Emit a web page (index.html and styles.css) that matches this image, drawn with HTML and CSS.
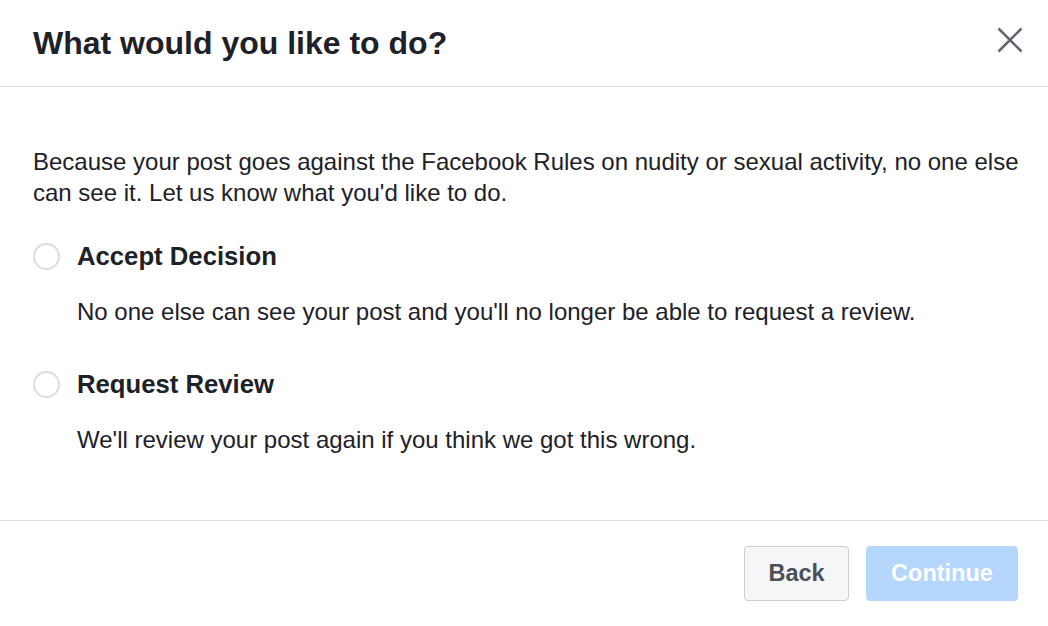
FILE: index.html
```html
<!DOCTYPE html>
<html>
<head>
<meta charset="utf-8">
<link rel="stylesheet" href="styles.css">
</head>
<body>
<div class="dialog">
  <div class="header">
    <h1 class="title">What would you like to do?</h1>
    <button class="close" aria-label="Close">
      <svg width="26" height="26" viewBox="0 0 26 26"><path d="M1.5 1.5 L24.5 24.5 M24.5 1.5 L1.5 24.5" stroke="#606770" stroke-width="2.6" fill="none"/></svg>
    </button>
  </div>
  <div class="body">
    <p class="intro">Because your post goes against the Facebook Rules on nudity or sexual activity, no one else can see it. Let us know what you'd like to do.</p>
    <div class="option">
      <div class="option-row"><span class="radio"></span><span class="option-title">Accept Decision</span></div>
      <p class="option-desc">No one else can see your post and you'll no longer be able to request a review.</p>
    </div>
    <div class="option">
      <div class="option-row"><span class="radio"></span><span class="option-title">Request Review</span></div>
      <p class="option-desc">We'll review your post again if you think we got this wrong.</p>
    </div>
  </div>
  <div class="footer">
    <button class="btn btn-back">Back</button>
    <button class="btn btn-continue">Continue</button>
  </div>
</div>
</body>
</html>
```

FILE: styles.css
```css
html, body {
  margin: 0;
  padding: 0;
  background: #fff;
}
body {
  font-family: "Liberation Sans", Arial, Helvetica, sans-serif;
  color: #1d2129;
}
.dialog {
  width: 1048px;
  height: 626px;
  display: flex;
  flex-direction: column;
}
.header {
  height: 86px;
  border-bottom: 1px solid #dddfe2;
  display: flex;
  align-items: center;
  justify-content: space-between;
  padding: 0 25px 0 33px;
  flex: none;
}
.title {
  margin: 0;
  font-size: 32px;
  line-height: 40px;
  font-weight: bold;
  color: #1d2129;
}
.close {
  border: 0;
  background: none;
  padding: 0;
  width: 26px;
  height: 26px;
  display: flex;
  align-self: flex-start;
  margin-top: 27px;
}
.body {
  padding: 59px 26px 0 33px;
  flex: 1;
  border-bottom: 1px solid #dddfe2;
}
.intro {
  margin: 0;
  font-size: 24px;
  line-height: 31px;
}
.option {
  margin-top: 33px;
}
.option + .option {
  margin-top: 42px;
}
.option-row {
  display: flex;
  align-items: center;
  gap: 17px;
  height: 30px;
}
.radio {
  width: 23px;
  height: 23px;
  border: 2px solid #dadde1;
  border-radius: 50%;
  box-sizing: content-box;
  flex: none;
}
.option-title {
  font-size: 25.7px;
  font-weight: bold;
}
.option-desc {
  margin: 26px 0 0 44px;
  font-size: 24px;
  line-height: 30px;
}
.footer {
  height: 105px;
  flex: none;
  display: flex;
  justify-content: flex-end;
  align-items: flex-start;
  gap: 17px;
  padding: 25px 30px 0 0;
  box-sizing: border-box;
}
.btn {
  font-family: "Liberation Sans", Arial, Helvetica, sans-serif;
  font-size: 23.5px;
  font-weight: bold;
  height: 55px;
  border-radius: 4px;
  padding: 0;
}
.btn-back {
  width: 105px;
  background: #f5f6f7;
  border: 1px solid #ccd0d5;
  color: #4b4f56;
}
.btn-continue {
  width: 152px;
  background: #b5d6fd;
  border: 1px solid #b5d6fd;
  color: #fff;
}
```
